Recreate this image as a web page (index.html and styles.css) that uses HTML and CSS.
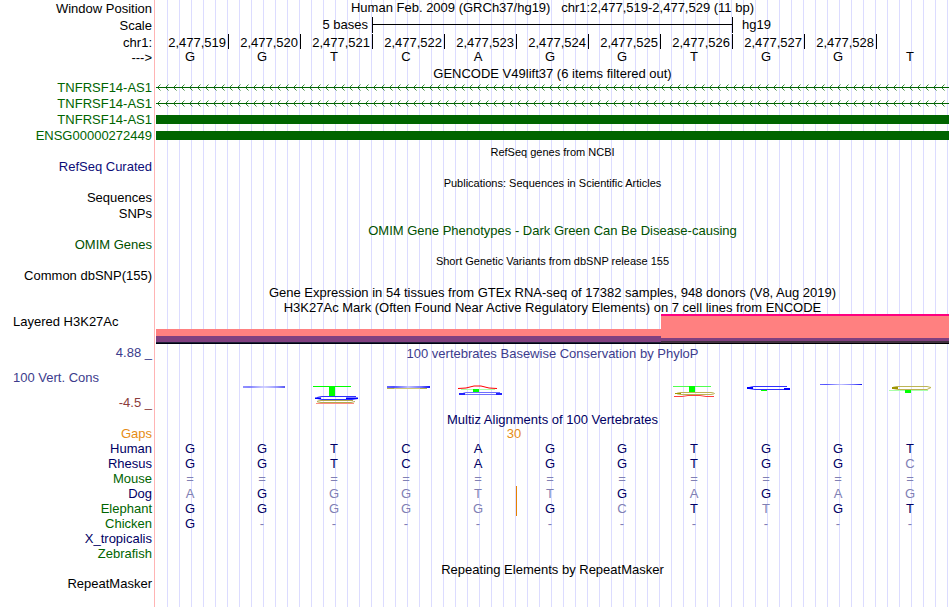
FILE: index.html
```
<!DOCTYPE html>
<html lang="en">
  <head>
    <meta charset="UTF-8" />
    <meta name="viewport" content="width=device-width, initial-scale=1.0" />
    <link rel="stylesheet" href="styles.css">
    <title>Human chr1:2,477,519-2,477,529</title>
  </head>
  <body>
    <main class="browser">
      <!-- position and ruler -->
      <div class="row ruler-row">
        <span class="label">Window Position</span>
        <div class="title position">Human Feb. 2009 (GRCh37/hg19)&nbsp;&nbsp; chr1:2,477,519-2,477,529 (11 bp)</div>
      </div>
      <div class="row ruler-row">
        <span class="label">Scale</span>
        <div class="cells">
          <span class="scale-size">5 bases</span>
          <span class="scale-bar"></span>
          <span class="scale-db">hg19</span>
        </div>
      </div>
      <div class="row title-row">
        <span class="label">chr1:</span>
        <div class="cells ticks">
          <span>2,477,519</span>
          <span>2,477,520</span>
          <span>2,477,521</span>
          <span>2,477,522</span>
          <span>2,477,523</span>
          <span>2,477,524</span>
          <span>2,477,525</span>
          <span>2,477,526</span>
          <span>2,477,527</span>
          <span>2,477,528</span>
        </div>
      </div>
      <div class="row">
        <span class="label">---&gt;</span>
        <div class="cells bases">
          <span>G</span><span>G</span><span>T</span><span>C</span><span>A</span><span>G</span><span>G</span><span>T</span><span>G</span><span>G</span><span>T</span>
        </div>
      </div>

      <!-- genes -->
      <div class="row tight">
        <div class="title">GENCODE V49lift37 (6 items filtered out)</div>
      </div>
      <div class="row gene">
        <span class="label">TNFRSF14-AS1</span>
        <svg class="intron" aria-hidden="true">
          <defs>
            <pattern id="arrows" width="8" height="16" patternUnits="userSpaceOnUse">
              <rect y="8" width="8" height="1" fill="#006400" />
              <path d="M4.500 5.500 1.500 8.500 4.500 11.500" fill="none" stroke="#006400" stroke-width=".8" />
            </pattern>
          </defs>
          <rect width="100%" height="16" fill="url(#arrows)" />
        </svg>
      </div>
      <div class="row gene">
        <span class="label">TNFRSF14-AS1</span>
        <svg class="intron" aria-hidden="true">
          <rect width="100%" height="16" fill="url(#arrows)" />
        </svg>
      </div>
      <div class="row gene">
        <span class="label">TNFRSF14-AS1</span>
        <div class="exon"></div>
      </div>
      <div class="row gene">
        <span class="label">ENSG00000272449</span>
        <div class="exon"></div>
      </div>

      <div class="row title-row">
        <div class="title small">RefSeq genes from NCBI</div>
      </div>
      <div class="row">
        <span class="label refseq">RefSeq Curated</span>
      </div>
      <div class="row title-row">
        <div class="title small">Publications: Sequences in Scientific Articles</div>
      </div>
      <div class="row">
        <span class="label">Sequences</span>
      </div>
      <div class="row">
        <span class="label">SNPs</span>
      </div>
      <div class="row title-row omim">
        <div class="title">OMIM Gene Phenotypes - Dark Green Can Be Disease-causing</div>
      </div>
      <div class="row omim">
        <span class="label">OMIM Genes</span>
      </div>
      <div class="row title-row">
        <div class="title small">Short Genetic Variants from dbSNP release 155</div>
      </div>
      <div class="row">
        <span class="label">Common dbSNP(155)</span>
      </div>
      <div class="row title-row">
        <div class="title">Gene Expression in 54 tissues from GTEx RNA-seq of 17382 samples, 948 donors (V8, Aug 2019)</div>
      </div>

      <!-- regulation -->
      <div class="row title-row">
        <div class="title">H3K27Ac Mark (Often Found Near Active Regulatory Elements) on 7 cell lines from ENCODE</div>
      </div>
      <div class="row histone-row">
        <span class="label left">Layered H3K27Ac</span>
        <div class="histone">
          <div class="low"></div>
          <div class="high"></div>
        </div>
      </div>

      <!-- conservation -->
      <div class="row title-row phylop">
        <span class="label">4.88 _</span>
        <div class="title">100 vertebrates Basewise Conservation by PhyloP</div>
      </div>
      <div class="row cons-row phylop">
        <div class="cons-labels">
          <span class="label left">100 Vert. Cons</span>
          <span class="label negative">-4.5 _</span>
        </div>
        <svg class="logo" viewBox="156 359 793 52" preserveAspectRatio="none" aria-hidden="true">
          <defs>
            <linearGradient id="blueFade">
              <stop offset="0" stop-color="#6464ff" />
              <stop offset=".15" stop-color="#5050ff" />
              <stop offset=".5" stop-color="#c0c0ff" />
              <stop offset=".8" stop-color="#7070ff" />
              <stop offset="1" stop-color="#1010f0" />
            </linearGradient>
          </defs>
          <g fill="none">
            <rect x="243" y="386" width="42" height="2" fill="url(#blueFade)" opacity=".7" />

            <path d="M313 386.5h38" stroke="#0f0" />
            <path d="M329 386h6v10h-6z" fill="#0f0" />
            <path d="M356 396.5h-34q-7 1-5 2l5 1h30l6-1" stroke="#3030ff" />
            <path d="M315 397.5h6v1.5h-6zM346 397.5h12v1.5h-12z" fill="#00f" />
            <path d="M353 400.5h-32q-8 1 0 2h30l4-1" stroke="#b4aa50" />
            <path d="M316 403.5h38" stroke="#ff8c80" />

            <rect x="387" y="386" width="43" height="2" fill="url(#blueFade)" />
            <path d="M387 388.5h40" stroke="#d0c878" />
            <path d="M387 388.5h7M420 388.5h7" stroke="#b8b050" />

            <path d="M458 388.5l8-.5 8-2h7l8 2 8 .5" stroke="#f00" />
            <path d="M461 389.5h34" stroke="#aaffaa" />
            <path d="M473 389h6v3h-6z" fill="#0f0" />
            <path d="M500 392.5h-34q-6 1 0 2h34" stroke="#7070ff" />
            <path d="M459 393h6v2h-6zM496 393h6v2h-6z" fill="#22f" />

            <path d="M673 386.5h38" stroke="#50ff50" />
            <path d="M689 386h6v6h-6z" fill="#0f0" />
            <path d="M711 392.5h-30q-9 1 0 2h30q7-1 0-2" stroke="#bdb555" />
            <path d="M675 393h6v1h-6z" fill="#a09600" />
            <path d="M674 396.5h8l6-1h12l6 1h8" stroke="#ff4040" />

            <path d="M787 386.5h-33q-7 1-5 2l6 1h32" stroke="#3030ff" />
            <path d="M747 387h6v2h-6zM784 388h6v2h-6z" fill="#00f" />
            <path d="M761 390h6v1h-6z" fill="#0f0" />

            <rect x="820" y="384" width="42" height="1" fill="url(#blueFade)" />

            <path d="M927 386.5h-30q-7 1-4 2l5 1h29l4-2-4-1" stroke="#bdb555" />
            <path d="M892 387h6v2h-6z" fill="#a09600" />
            <path d="M889 390.5h39" stroke="#aaffaa" />
            <path d="M905 390h6v3h-6z" fill="#0f0" />
          </g>
        </svg>
      </div>

      <!-- alignments, b = differs from the human base -->
      <div class="row align-title">
        <div class="title multiz">Multiz Alignments of 100 Vertebrates</div>
      </div>
      <table class="multiz">
        <tr class="gaps"><th scope="row">Gaps</th><td></td><td></td><td></td><td></td><td colspan="2">30</td><td></td><td></td><td></td><td></td><td></td></tr>
        <tr><th scope="row">Human</th><td>G</td><td>G</td><td>T</td><td>C</td><td>A</td><td>G</td><td>G</td><td>T</td><td>G</td><td>G</td><td>T</td></tr>
        <tr><th scope="row">Rhesus</th><td>G</td><td>G</td><td>T</td><td>C</td><td>A</td><td>G</td><td>G</td><td>T</td><td>G</td><td>G</td><td class="b">C</td></tr>
        <tr class="alt faint"><th scope="row">Mouse</th><td>=</td><td>=</td><td>=</td><td>=</td><td>=</td><td>=</td><td>=</td><td>=</td><td>=</td><td>=</td><td>=</td></tr>
        <tr><th scope="row">Dog</th><td class="b">A</td><td>G</td><td class="b">G</td><td class="b">G</td><td class="b insert">T</td><td class="b">T</td><td>G</td><td class="b">A</td><td>G</td><td class="b">A</td><td class="b">G</td></tr>
        <tr class="alt"><th scope="row">Elephant</th><td>G</td><td>G</td><td class="b">G</td><td class="b">G</td><td class="b insert">G</td><td>G</td><td class="b">C</td><td>T</td><td class="b">T</td><td>G</td><td>T</td></tr>
        <tr class="alt"><th scope="row">Chicken</th><td>G</td><td class="b">-</td><td class="b">-</td><td class="b">-</td><td class="b">-</td><td class="b">-</td><td class="b">-</td><td class="b">-</td><td class="b">-</td><td class="b">-</td><td class="b">-</td></tr>
        <tr><th scope="row">X_tropicalis</th><td colspan="11"></td></tr>
        <tr class="alt"><th scope="row">Zebrafish</th><td colspan="11"></td></tr>
      </table>

      <div class="row tight">
        <div class="title">Repeating Elements by RepeatMasker</div>
      </div>
      <div class="row">
        <span class="label">RepeatMasker</span>
      </div>
    </main>
  </body>
</html>
```
FILE: styles.css
```
* {
  box-sizing: border-box;
}

body {
  margin: 0;
  background: white;
  color: black;
  font-family: "Liberation Sans", Arial, Helvetica, sans-serif;
  font-size: 13px;
  line-height: 17px;
  white-space: nowrap;
}

/* pink divider after the labels, then six guide lines per base */
.browser {
  min-height: 100vh;
  padding-right: 1px;
  background-image:
    linear-gradient(to right, white 154px, #ffb4b4 154px, #ffb4b4 155px, white 155px),
    linear-gradient(to left, #dcdcff 1px, transparent 1px);
  background-size: 156px 100%, calc((100% - 158px) / 66) 100%;
  background-position: 0 0, 156px 0;
  background-repeat: no-repeat, repeat-x;
}

.row {
  display: grid;
  grid-template-columns: 154px 1fr;
  column-gap: 2px;
  height: 16px;
}

.ruler-row {
  height: 17px;
}

.title-row,
.align-title {
  height: 15px;
}

.tight {
  height: 14px;
}

.label {
  padding-right: 2px;
  text-align: right;
}

.left {
  padding-left: 13px;
  text-align: left;
}

.title {
  grid-column: 2;
  text-align: center;
}

.title-row .title {
  line-height: 19px;
}

.position {
  line-height: 15px;
}

.small {
  font-size: 11px;
}

/* ruler */
.cells {
  display: grid;
  grid-template-columns: repeat(11, 1fr);
  margin-left: 1px;
}

.scale-size {
  grid-column: span 3;
  padding-right: 5px;
  line-height: 15px;
  text-align: right;
}

.scale-bar {
  grid-column: span 5;
  height: 16px;
  margin-left: -1px;
  border: solid black;
  border-width: 0 1px;
  background: linear-gradient(black, black) 0 7px / 100% 1px no-repeat;
}

.scale-db {
  padding-left: 9px;
  line-height: 15px;
}

.ticks span {
  height: 15px;
  padding-right: 2px;
  border-right: 1px solid black;
  text-align: right;
}

.bases span {
  padding-right: 6px;
  line-height: 15px;
  text-align: center;
}

/* genes */
.gene {
  color: #006400;
}

.intron {
  display: block;
  width: 100%;
  height: 16px;
}

.exon {
  height: 9px;
  margin-top: 4px;
  background: #006400;
}

.refseq {
  color: #0c0c78;
}

.omim {
  color: #005000;
}

/* H3K27Ac layers */
.histone-row {
  height: 31px;
}

.histone {
  display: grid;
  grid-template-columns: 7fr 4fr;
  align-items: end;
  padding-left: 1px;
}

.low {
  height: 15px;
  margin-left: -1px;
  background: linear-gradient(#ff8080 7px, #804080 7px, #804080 13px, #202038 13px, #202038 14px, #000010 14px);
}

.high {
  height: 30px;
  background: linear-gradient(#ff0080 2px, #ff8080 2px, #ff8080 24px, #804080 24px, #804080 27px, #403040 27px, #403040 29px, black 29px);
}

/* conservation */
.phylop {
  color: #3c3c8c;
}

.negative {
  color: #8c3c3c;
}

.cons-row {
  height: 52px;
}

.cons-labels {
  display: flex;
  flex-direction: column;
  gap: 8px;
  padding-top: 10px;
}

.logo {
  display: block;
  width: 100%;
  height: 52px;
}

/* alignments */
.multiz {
  color: #000064;
}

table {
  width: 100%;
  table-layout: fixed;
  border-spacing: 0;
  line-height: 15px;
}

th {
  width: 157px;
  height: 15px;
  padding: 0 5px 0 0;
  font-weight: normal;
  text-align: right;
}

td {
  padding: 0 6px 0 0;
  text-align: center;
}

.alt th {
  color: #006400;
}

.gaps,
.gaps th {
  color: #e68c14;
}

.b,
.faint td {
  color: #8080b4;
}

.insert {
  padding-right: 5px;
  border-right: 1px solid #e68200;
}
```
